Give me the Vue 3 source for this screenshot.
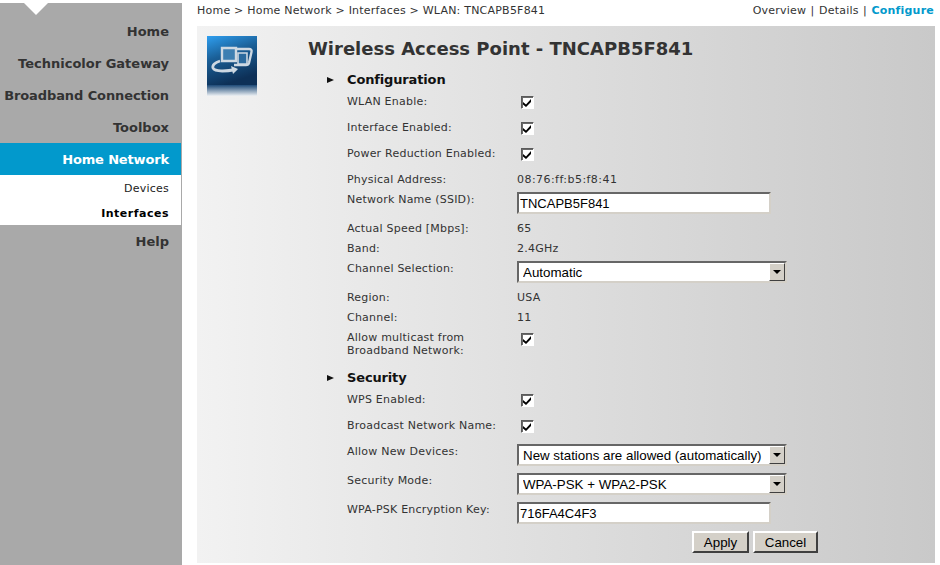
<script setup>
const nav = [
  { label: 'Home' },
  { label: 'Technicolor Gateway' },
  { label: 'Broadband Connection', tight: true },
  { label: 'Toolbox' },
]
const crumbs = 'Home > Home Network > Interfaces > WLAN: TNCAPB5F841'

const config = [
  { label: 'WLAN Enable:', type: 'check', h: 26 },
  { label: 'Interface Enabled:', type: 'check', h: 26 },
  { label: 'Power Reduction Enabled:', type: 'check', h: 26 },
  { label: 'Physical Address:', type: 'text', value: '08:76:ff:b5:f8:41', h: 20, wide: true },
  { label: 'Network Name (SSID):', type: 'input', value: 'TNCAPB5F841', h: 29 },
  { label: 'Actual Speed [Mbps]:', type: 'text', value: '65', h: 20 },
  { label: 'Band:', type: 'text', value: '2.4GHz', h: 20 },
  { label: 'Channel Selection:', type: 'select', value: 'Automatic', h: 29 },
  { label: 'Region:', type: 'text', value: 'USA', h: 20 },
  { label: 'Channel:', type: 'text', value: '11', h: 20 },
  { label: 'Allow multicast from\nBroadband Network:', type: 'check', h: 32, tall: true },
]
const security = [
  { label: 'WPS Enabled:', type: 'check', h: 26 },
  { label: 'Broadcast Network Name:', type: 'check', h: 26 },
  { label: 'Allow New Devices:', type: 'select', value: 'New stations are allowed (automatically)', h: 29 },
  { label: 'Security Mode:', type: 'select', value: 'WPA-PSK + WPA2-PSK', h: 29 },
  { label: 'WPA-PSK Encryption Key:', type: 'input', value: '716FA4C4F3', h: 29 },
]
const sections = [
  { title: 'Configuration', rows: config },
  { title: 'Security', rows: security },
]
</script>

<template>
  <div class="page">
    <aside class="side">
      <div class="notch"></div>
      <a v-for="n in nav" :key="n.label" class="nav" :class="{ tight: n.tight }">{{ n.label }}</a>
      <a class="nav active">Home Network</a>
      <div class="sub">
        <a class="subitem">Devices</a>
        <a class="subitem cur">Interfaces</a>
      </div>
      <a class="nav">Help</a>
    </aside>

    <main class="main">
      <div class="top">
        <span class="crumbs">{{ crumbs }}</span>
        <span class="tabs">Overview | Details | <b>Configure</b></span>
      </div>
      <section class="panel">
        <div class="iconbox">
          <svg width="50" height="60" viewBox="0 0 50 60">
            <defs>
              <linearGradient id="bg" x1="0" y1="0" x2="0.35" y2="1">
                <stop offset="0" stop-color="#2f9ff0" />
                <stop offset="0.45" stop-color="#1a5f97" />
                <stop offset="1" stop-color="#0d3057" />
              </linearGradient>
              <linearGradient id="fade" x1="0" y1="0" x2="0" y2="1">
                <stop offset="0" stop-color="#1d4a78" />
                <stop offset="1" stop-color="#eef1f4" />
              </linearGradient>
            </defs>
            <rect width="50" height="49" fill="url(#bg)" />
            <rect y="49" width="50" height="11" fill="url(#fade)" />
            <g fill="none" stroke="#cdd8e2" stroke-width="2.4">
              <path d="M28 13h14c2 0 3 1 2.500 3l-2.500 11c-.4 1.500-1 2-3 2H27" />
              <path d="M31 17h9v11h-9z" fill="#2b6a9e" stroke-width="1.600" />
              <path d="M15 12h14v13H15z" fill="#3d7fb2" />
            </g>
            <path d="M13 25c-5 1.500-8 4-7 7 1.500 3.500 12 3.500 23 1.500" fill="none" stroke="#cdd8e2" stroke-width="2.800" />
            <path d="M24 30l7 3-5 5z" fill="#cdd8e2" />
          </svg>
        </div>
        <div class="content">
          <h1>Wireless Access Point - TNCAPB5F841</h1>
          <div v-for="s in sections" :key="s.title" class="section">
            <h2><span class="arrow"></span>{{ s.title }}</h2>
            <div v-for="r in s.rows" :key="r.label" class="row" :style="{ height: r.h + 'px' }">
              <label class="lbl">{{ r.label }}</label>
              <div class="val">
                <span v-if="r.type === 'check'" class="check" :class="{ tall: r.tall }">
                  <svg width="9" height="8" viewBox="0 0 9 8"><path d="M0 3l3 2.500L8 0v3L3 8 0 5.500z" fill="#000" /></svg>
                </span>
                <span v-else-if="r.type === 'text'" class="txt" :class="{ wide: r.wide }">{{ r.value }}</span>
                <input v-else-if="r.type === 'input'" class="field" :value="r.value" />
                <span v-else class="selwrap">
                  <select class="sel"><option>{{ r.value }}</option></select>
                  <span class="drop"><i></i></span>
                </span>
              </div>
            </div>
          </div>
          <div class="actions">
            <button class="btn apply">Apply</button>
            <button class="btn cancel">Cancel</button>
          </div>
        </div>
      </section>
    </main>
  </div>
</template>

<style>
html, body { margin: 0; background: #fff; }
</style>

<style scoped>
.page {
  display: flex;
  width: 940px;
  height: 565px;
  overflow: hidden;
  background: #fff;
  font-family: "DejaVu Sans", Verdana, sans-serif;
  font-size: 11px;
  letter-spacing: .22px;
  color: #333;
}
.side {
  position: relative;
  width: 182px;
  height: 562px;
  margin-top: 3px;
  background: #a9a9a9;
  padding-top: 12px;
  box-sizing: border-box;
  flex: none;
}
.notch {
  position: absolute;
  left: 24px;
  top: 0;
  width: 0;
  height: 0;
  border-left: 12px solid transparent;
  border-right: 12px solid transparent;
  border-top: 12px solid #fff;
}
.nav {
  display: flex;
  align-items: center;
  justify-content: flex-end;
  height: 32px;
  padding-right: 13px;
  font-size: 13px;
  font-weight: 700;
  letter-spacing: 0;
  color: #333;
  white-space: nowrap;
}
.nav.tight { letter-spacing: -.1px; }
.nav.active {
  width: 181px;
  box-sizing: border-box;
  padding-right: 12px;
  letter-spacing: -.15px;
  background: #0299cc;
  color: #fff;
}
.sub {
  width: 181px;
  height: 50px;
  box-sizing: border-box;
  padding-top: 1px;
  background: #fff;
}
.subitem {
  display: flex;
  align-items: center;
  justify-content: flex-end;
  height: 25px;
  padding-right: 12px;
  color: #222;
}
.subitem.cur { font-weight: 700; letter-spacing: .5px; color: #000; }
.main {
  margin-left: 15px;
  width: 738px;
  flex: none;
}
.top {
  display: flex;
  justify-content: space-between;
  align-items: center;
  height: 20px;
  margin-bottom: 6px;
}
.tabs { word-spacing: .7px; margin-right: 1px; }
.tabs b { color: #0299cc; }
.panel {
  display: flex;
  height: 537px;
  background: linear-gradient(90deg, #f2f2f2, #c9c9c9);
  padding: 10px 0 0 10px;
  box-sizing: border-box;
}
.iconbox { width: 101px; flex: none; height: 60px; }
.iconbox svg { display: block; }
.content { width: 490px; }
h1 {
  margin: 2px 0 0;
  height: 22px;
  font-size: 18px;
  line-height: 22px;
  font-weight: 700;
  letter-spacing: 0;
  color: #333;
  white-space: nowrap;
}
h2 {
  position: relative;
  margin: 0;
  padding-left: 39px;
  height: 22px;
  font-size: 13px;
  line-height: 22px;
  font-weight: 700;
  letter-spacing: -.15px;
  color: #111;
}
.section { margin-top: 9px; }
.section + .section { margin-top: 8px; }
.arrow {
  position: absolute;
  left: 19px;
  top: 8px;
  border-left: 7px solid #111;
  border-top: 3px solid transparent;
  border-bottom: 3px solid transparent;
}
.row { display: flex; padding-left: 39px; }
.lbl { width: 170px; flex: none; line-height: 13px; padding-top: 4px; white-space: pre-line; }
.val { display: flex; align-items: flex-start; }
.txt { padding-top: 4px; line-height: 13px; }
.txt.wide { letter-spacing: .45px; }
.check {
  display: flex;
  align-items: center;
  justify-content: center;
  width: 13px;
  height: 13px;
  margin: 5px 0 0 4px;
  background: #fff;
  box-sizing: border-box;
  border: 1px solid;
  border-color: #5a5a5a #fff #fff #5a5a5a;
  box-shadow: inset 1px 1px 0 #6a6a6a;
}
.check.tall { margin-top: 6px; }
.field {
  width: 254px;
  height: 22px;
  margin-top: 3px;
  box-sizing: border-box;
  padding: 1px;
  font: 13px "Liberation Sans", Arial, sans-serif;
  letter-spacing: 0;
  color: #000;
  background: #fff;
  border: 2px solid;
  border-color: #666 #d4d0c8 #d4d0c8 #666;
  border-radius: 0;
}
.selwrap { position: relative; display: block; width: 270px; height: 22px; margin-top: 3px; }
.sel {
  appearance: none;
  width: 270px;
  height: 22px;
  box-sizing: border-box;
  padding: 0 4px;
  font: 13.33px "Liberation Sans", Arial, sans-serif;
  letter-spacing: 0;
  color: #000;
  background: #fff;
  border: 2px solid;
  border-color: #666 #d4d0c8 #d4d0c8 #666;
  border-radius: 0;
}
.drop {
  position: absolute;
  right: 2px;
  top: 2px;
  width: 16px;
  height: 18px;
  display: flex;
  align-items: center;
  justify-content: center;
  box-sizing: border-box;
  background: #d4d0c8;
  border: 1px solid;
  border-color: #fff #404040 #404040 #fff;
}
.drop i {
  border-top: 4px solid #000;
  border-left: 4px solid transparent;
  border-right: 4px solid transparent;
}
.actions {
  display: flex;
  justify-content: flex-end;
  gap: 4px;
  margin-top: 3px;
  width: 510px;
}
.btn {
  height: 22px;
  box-sizing: border-box;
  font: 13.33px "Liberation Sans", Arial, sans-serif;
  letter-spacing: 0;
  color: #000;
  background: #d4d0c8;
  border: 2px solid;
  border-color: #fff #404040 #404040 #fff;
  border-radius: 0;
}
.apply { width: 57px; }
.cancel { width: 65px; }
</style>
